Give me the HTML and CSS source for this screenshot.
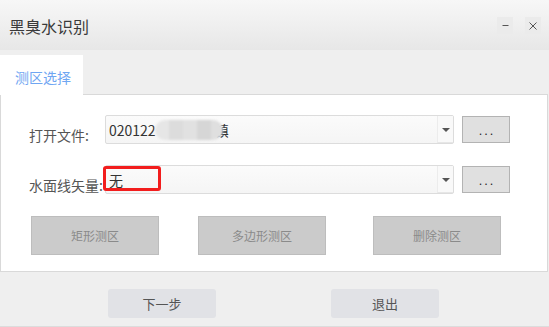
FILE: index.html
```html
<!DOCTYPE html>
<html lang="zh">
<head>
<meta charset="utf-8">
<title>黑臭水识别</title>
<link rel="stylesheet" href="styles.css">
</head>
<body>
<div class="window">
  <header class="titlebar">
    <span class="title">黑臭水识别</span>
    <div class="winctl">
      <button class="ctl" aria-label="最小化">
        <svg width="16" height="16" viewBox="0 0 16 16"><path d="M5.5 7.5h6" stroke="#555" stroke-width="1"/></svg>
      </button>
      <button class="ctl" aria-label="关闭">
        <svg width="16" height="16" viewBox="0 0 16 16"><path d="M4.5 4.5l7 7M11.5 4.5l-7 7" stroke="#555" stroke-width="1"/></svg>
      </button>
    </div>
  </header>
  <main class="content">
    <div class="tabs">
      <div class="tab active">测区选择</div>
    </div>
    <section class="panel">
      <div class="row">
        <label class="label">打开文件:</label>
        <div class="combo">
          <span class="combo-text">020122<span class="tail">镇</span></span>
          <span class="mosaic"></span>
          <span class="drop"><span class="arrow"></span></span>
        </div>
        <button class="browse">. . .</button>
      </div>
      <div class="row row2">
        <label class="label">水面线矢量:</label>
        <div class="combo">
          <span class="combo-text">无</span>
          <span class="highlight"></span>
          <span class="drop"><span class="arrow"></span></span>
        </div>
        <button class="browse">. . .</button>
      </div>
      <div class="actions">
        <button class="act">矩形测区</button>
        <button class="act a2">多边形测区</button>
        <button class="act a3">删除测区</button>
      </div>
    </section>
    <footer class="footer">
      <button class="fbtn">下一步</button>
      <button class="fbtn f2">退出</button>
    </footer>
  </main>
</div>
</body>
</html>
```
FILE: styles.css
```css
* { box-sizing: border-box; }
html, body { margin: 0; padding: 0; }
body {
  width: 549px;
  height: 327px;
  overflow: hidden;
  background: #efefef;
  font-family: "Noto Sans CJK SC", "Microsoft YaHei", sans-serif;
}
button { font-family: inherit; padding: 0; margin: 0; cursor: default; }

.window {
  height: 327px;
  display: flex;
  flex-direction: column;
  border-bottom: 1px solid #dcdcdc;
}

.titlebar {
  height: 50px;
  flex: none;
  display: flex;
  align-items: center;
  padding-left: 9px;
  background: linear-gradient(#f7f7f7, #e7e7e7);
}
.title {
  font-size: 16px;
  color: #3a3a3a;
  line-height: 20px;
  margin-top: 2px;
}
.winctl {
  margin-left: auto;
  display: flex;
  gap: 12px;
  margin-right: 8px;
  margin-top: 1px;
}
.ctl {
  width: 16px;
  height: 17px;
  border: none;
  background: #ebebeb;
  display: flex;
  align-items: center;
  justify-content: center;
}
.ctl svg { display: block; }

.content {
  flex: 1;
  display: flex;
  flex-direction: column;
}

.tabs {
  display: flex;
  margin-top: 5px;
  height: 39px;
  position: relative;
  z-index: 1;
}
.tab {
  width: 83px;
  height: 40px;
  background: #fff;
  color: #6fa6f2;
  font-size: 14px;
  line-height: 20px;
  padding: 12px 0 0 15px;
}

.panel {
  width: 548px;
  height: 178px;
  background: #fff;
  border: 1px solid #d9d9d9;
  padding: 20px 0 0 28px;
}

.row {
  display: flex;
  align-items: flex-start;
  height: 29px;
}
.row2 { margin-top: 21px; }
.label {
  width: 76px;
  flex: none;
  font-size: 14px;
  line-height: 20px;
  color: #555;
  padding-top: 10px;
  white-space: nowrap;
}
.combo {
  position: relative;
  width: 349px;
  height: 29px;
  border: 1px solid #dcdcdc;
  border-radius: 2px;
  background: linear-gradient(#fbfbfb, #f5f5f5);
  display: flex;
  align-items: center;
}
.combo-text {
  font-size: 14px;
  color: #333;
  padding-left: 3px;
  line-height: 20px;
  white-space: nowrap;
}
.tail { margin-left: 59px; }
.mosaic {
  position: absolute;
  left: 49px;
  top: 4px;
  width: 68px;
  height: 20px;
  border-radius: 10px;
  background:
    linear-gradient(90deg,
      #e6e6e6 0 14px, #dcdcdc 14px 28px, #e1e1e1 28px 42px, #d6d6d6 42px 56px, #dfdfdf 56px 68px);
  filter: blur(1px);
}
.highlight {
  position: absolute;
  left: -3px;
  top: 0;
  width: 58px;
  height: 25px;
  border: 3px solid #f21d1d;
  border-radius: 3px;
}
.drop {
  margin-left: auto;
  width: 16px;
  height: 27px;
  border-left: 1px solid #ececec;
  border-bottom: 1px solid #e6e6e6;
  background: #f9f9f9;
  display: flex;
  align-items: center;
  justify-content: center;
}
.arrow {
  width: 0;
  height: 0;
  border-left: 4px solid transparent;
  border-right: 4px solid transparent;
  border-top: 4px solid #555;
  margin-top: 1px;
}
.browse {
  width: 48px;
  height: 27px;
  margin-left: 8px;
  margin-top: 1px;
  background: #e0e0e0;
  border: 1px solid #b3b3b3;
  font-size: 11px;
  color: #222;
}

.actions {
  display: flex;
  margin-top: 22px;
  padding-left: 2px;
}
.act {
  width: 128px;
  height: 39px;
  background: #cbcbcb;
  border: 1px solid #bdbdbd;
  color: #8a8a8a;
  font-size: 12px;
}
.a2 { margin-left: 39px; }
.a3 { margin-left: 47px; }

.footer {
  display: flex;
  padding-left: 108px;
  margin-top: 17px;
}
.fbtn {
  width: 108px;
  height: 29px;
  background: #e1e2e6;
  border: none;
  border-radius: 3px;
  color: #555;
  font-size: 13px;
}
.f2 { margin-left: 115px; }
```
